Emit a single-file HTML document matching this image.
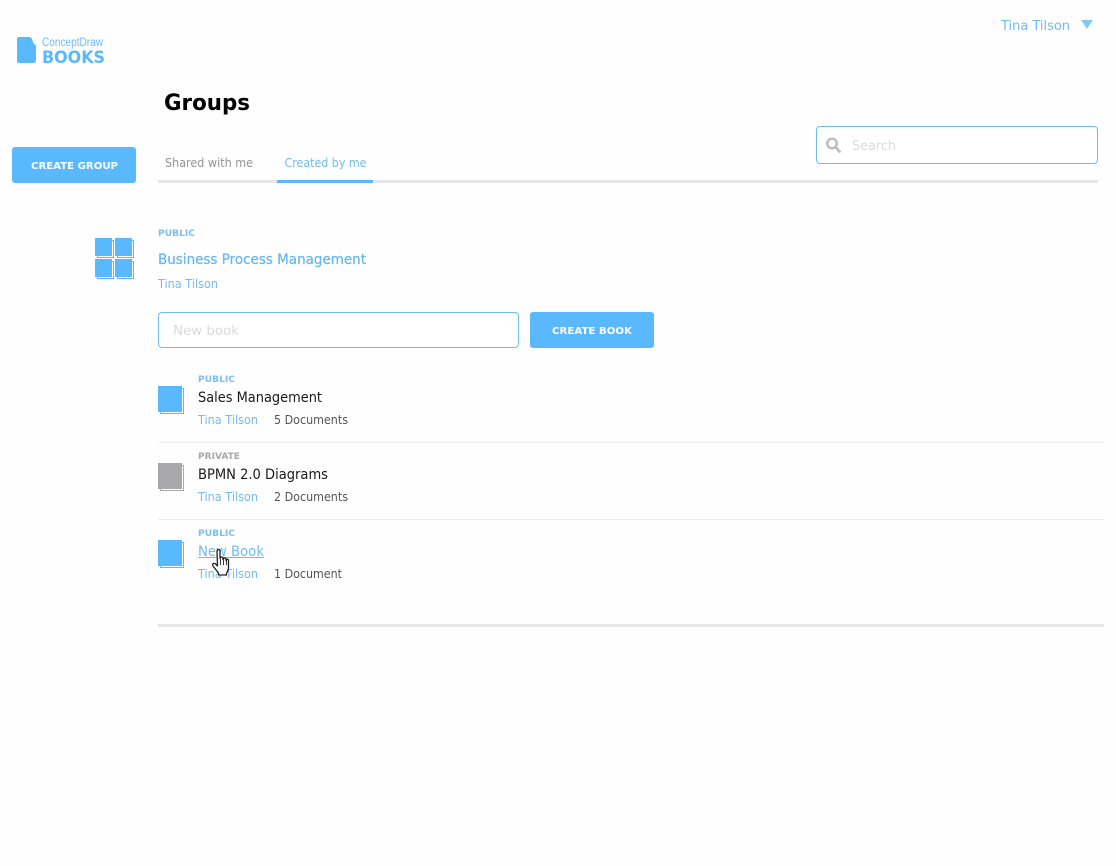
<!DOCTYPE html>
<html><head><meta charset="utf-8"><title>Groups</title>
<style>
html,body{margin:0;padding:0;background:#fefefe;width:1116px;height:866px;overflow:hidden}
svg{display:block}
text{font-family:"DejaVu Sans","Liberation Sans",sans-serif;white-space:pre}
</style></head><body>
<svg width="1116" height="866" viewBox="0 0 1116 866" xmlns="http://www.w3.org/2000/svg">
<rect width="1116" height="866" fill="#fefefe"/>
<!-- logo -->
<path d="M19 37h10q2 0 3 2l1 3q0 1 1.500 2t1.500 3v13q0 3-3 3H19q-2 0-2-2V39q0-2 2-2z" fill="#5ab8fe"/>
<text x="42" y="46" font-size="11.500" fill="#6bbcf5" textLength="61" lengthAdjust="spacingAndGlyphs" style="font-family:'Liberation Sans',sans-serif">ConceptDraw</text>
<text x="42" y="63" font-size="16.500" font-weight="700" fill="#5ab8fe" textLength="63" lengthAdjust="spacingAndGlyphs">BOOKS</text>
<!-- user -->
<text x="1001" y="30" font-size="13.500" fill="#72bcf0" textLength="69" lengthAdjust="spacingAndGlyphs">Tina Tilson</text>
<path d="M1081 20h12l-6 9z" fill="#80c8f8"/>
<!-- title -->
<text x="164" y="110" font-size="22" font-weight="700" fill="#000" textLength="86" lengthAdjust="spacingAndGlyphs">Groups</text>
<!-- create group -->
<rect x="12" y="147" width="124" height="36" rx="3" fill="#5ab8fe"/>
<text x="31" y="169" font-size="9.500" font-weight="700" fill="#fff" textLength="87" lengthAdjust="spacingAndGlyphs">CREATE GROUP</text>
<!-- tabs -->
<text x="165" y="167" font-size="12" fill="#949494" textLength="88" lengthAdjust="spacingAndGlyphs">Shared with me</text>
<text x="284.500" y="167" font-size="12" fill="#72bcf0" textLength="82" lengthAdjust="spacingAndGlyphs">Created by me</text>
<rect x="158" y="180" width="940" height="3" fill="#e7e7e9"/>
<rect x="277" y="180" width="96" height="3" fill="#5ab8fe"/>
<!-- search -->
<rect x="816.500" y="126.500" width="281" height="37" rx="3.500" fill="#fff" stroke="#6fbde8"/>
<circle cx="832" cy="143.500" r="4.800" fill="none" stroke="#bdbdbd" stroke-width="2.400"/>
<path d="M835.500 147l4 4.500" stroke="#bdbdbd" stroke-width="2.800" stroke-linecap="round"/>
<text x="852" y="150" font-size="13.500" fill="#dcdade" textLength="44" lengthAdjust="spacingAndGlyphs">Search</text>
<!-- group icon -->
<g fill="#fff" stroke="#5ab8fe" stroke-width="1">
<rect x="97.500" y="240.500" width="16" height="17"/>
<rect x="117.500" y="240.500" width="16" height="17"/>
<rect x="97.500" y="261.500" width="16" height="17"/>
<rect x="117.500" y="261.500" width="16" height="17"/>
</g>
<g fill="#5ab8fe">
<rect x="95" y="238" width="17" height="18"/>
<rect x="115" y="238" width="17" height="18"/>
<rect x="95" y="259" width="17" height="18"/>
<rect x="115" y="259" width="17" height="18"/>
</g>
<!-- group text -->
<text x="158" y="236" font-size="9" font-weight="700" fill="#7cbfee" textLength="37" lengthAdjust="spacingAndGlyphs">PUBLIC</text>
<text x="158" y="264" font-size="14" fill="#68b8f2" stroke="#68b8f2" stroke-width=".25" textLength="208" lengthAdjust="spacingAndGlyphs">Business Process Management</text>
<text x="158" y="288" font-size="12" fill="#72bcf0" textLength="60" lengthAdjust="spacingAndGlyphs">Tina Tilson</text>
<!-- new book -->
<rect x="158.500" y="312.500" width="360" height="35" rx="3.500" fill="#fff" stroke="#6fbde8"/>
<text x="173" y="335" font-size="13.500" fill="#dcdade" textLength="66" lengthAdjust="spacingAndGlyphs">New book</text>
<rect x="530" y="312" width="124" height="36" rx="3" fill="#5ab8fe"/>
<text x="552" y="334" font-size="9.500" font-weight="700" fill="#fff" textLength="80" lengthAdjust="spacingAndGlyphs">CREATE BOOK</text>
<!-- book 1 -->
<rect x="160.500" y="388.500" width="23" height="25" fill="#fff" stroke="#5ab8fe"/>
<rect x="158" y="386" width="24" height="26" fill="#5ab8fe"/>
<text x="198" y="382" font-size="9" font-weight="700" fill="#7cbfee" textLength="37" lengthAdjust="spacingAndGlyphs">PUBLIC</text>
<text x="198" y="402" font-size="14" fill="#1a1a1a" textLength="124" lengthAdjust="spacingAndGlyphs">Sales Management</text>
<text x="198" y="424" font-size="12" fill="#72bcf0" textLength="60" lengthAdjust="spacingAndGlyphs">Tina Tilson</text>
<text x="274" y="424" font-size="12" fill="#555" textLength="74" lengthAdjust="spacingAndGlyphs">5 Documents</text>
<rect x="158" y="442" width="946" height="1" fill="#ececec"/>
<!-- book 2 -->
<rect x="160.500" y="465.500" width="23" height="25" fill="#fff" stroke="#a8a8aa"/>
<rect x="158" y="463" width="24" height="26" fill="#a8a8aa"/>
<text x="198" y="459" font-size="9" font-weight="700" fill="#a8a8aa" textLength="42" lengthAdjust="spacingAndGlyphs">PRIVATE</text>
<text x="198" y="479" font-size="14" fill="#1a1a1a" textLength="130" lengthAdjust="spacingAndGlyphs">BPMN 2.0 Diagrams</text>
<text x="198" y="501" font-size="12" fill="#72bcf0" textLength="60" lengthAdjust="spacingAndGlyphs">Tina Tilson</text>
<text x="274" y="501" font-size="12" fill="#555" textLength="74" lengthAdjust="spacingAndGlyphs">2 Documents</text>
<rect x="158" y="519" width="946" height="1" fill="#ececec"/>
<!-- book 3 -->
<rect x="160.500" y="542.500" width="23" height="25" fill="#fff" stroke="#5ab8fe"/>
<rect x="158" y="540" width="24" height="26" fill="#5ab8fe"/>
<text x="198" y="536" font-size="9" font-weight="700" fill="#7cbfee" textLength="37" lengthAdjust="spacingAndGlyphs">PUBLIC</text>
<text x="198" y="556" font-size="14" fill="#72bcf0" textLength="66" lengthAdjust="spacingAndGlyphs">New Book</text>
<rect x="198" y="557" width="66" height="1" fill="#72bcf0"/>
<text x="198" y="578" font-size="12" fill="#72bcf0" textLength="60" lengthAdjust="spacingAndGlyphs">Tina Tilson</text>
<text x="274" y="578" font-size="12" fill="#555" textLength="68" lengthAdjust="spacingAndGlyphs">1 Document</text>
<rect x="158" y="624" width="946" height="3" fill="#e7e7e9"/>
<!-- cursor -->
<g transform="translate(-2 -2)">
<path d="M219 553.500q0-2 1.500-2t1.500 2v7q0-1.500 1.500-1.500t1.500 1.500v1q0-1.500 1.500-1.500t1.500 1.500v1q0-1.300 1.300-1.300t1.200 1.300v7q0 3-2 5.500v2h-8v-2l-5.500-7q-1-2 .5-2.500t3 1.500l1 1z" fill="#fff" stroke="#222" stroke-width="1.300" stroke-linejoin="round"/>
<path d="M222.500 561v6M225.500 561v6M228.500 562v5" stroke="#222" stroke-width=".9"/>
</g>
</svg>
</body></html>
